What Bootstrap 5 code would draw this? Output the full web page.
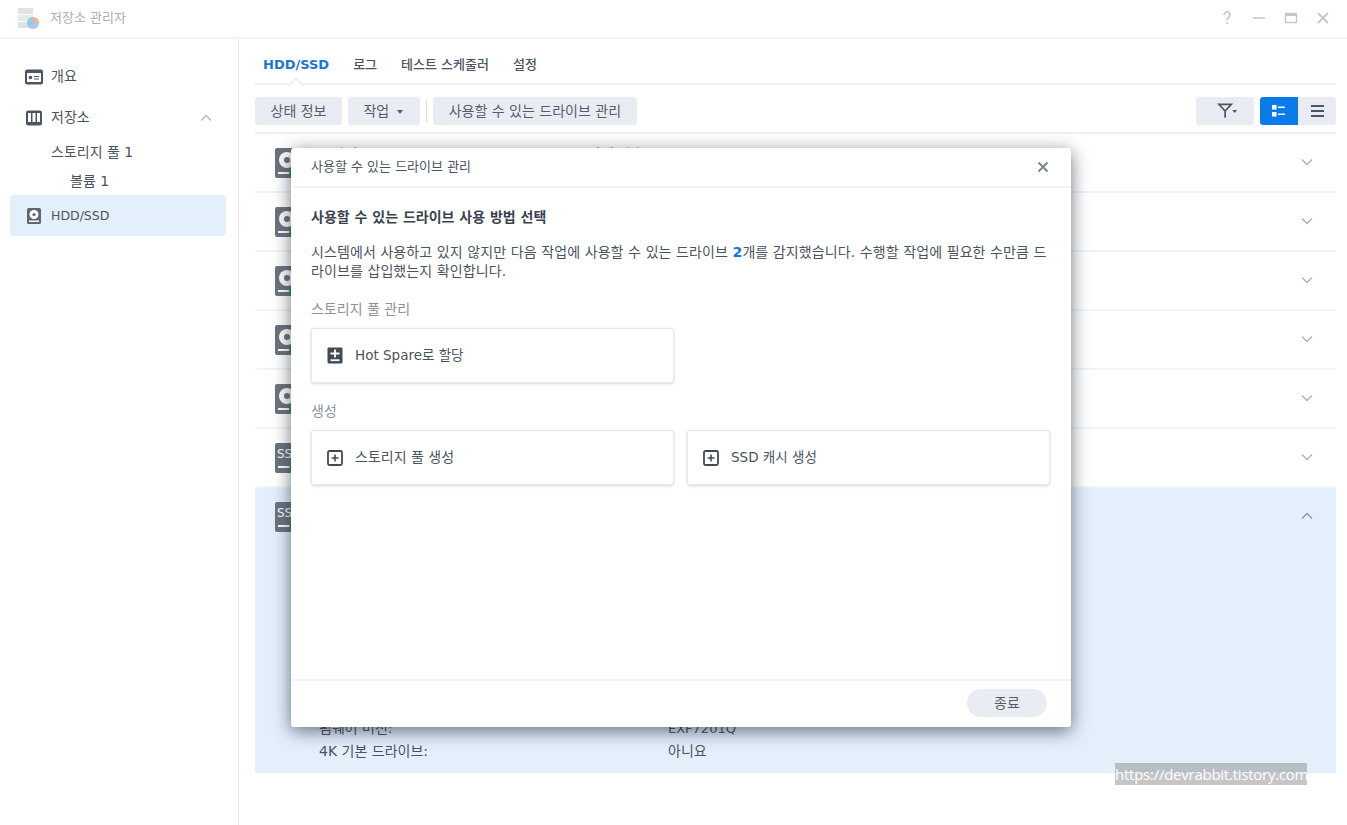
<!DOCTYPE html>
<html lang="ko">
  <head>
    <title>저장소 관리자</title>
    <meta charset="utf-8" />
    <meta name="viewport" content="width=device-width, initial-scale=1" />
    <link
      href="https://cdn.jsdelivr.net/npm/bootstrap@5.3.3/dist/css/bootstrap.min.css"
      rel="stylesheet"
    />
    <style>
      html, body { height: 825px; overflow: hidden; }
      body { font-family: "DejaVu Sans", "Noto Sans CJK KR", sans-serif; font-size: 14px; color: #4a545e; background: #fff; }
      .app-title { height: 39px; border-bottom: 2px solid #f1f3f6; padding: 0 16px 2px 17px; color: #a9afb6; font-size: 13px; }
      .app-logo { display: block; margin-right: 9px; }
      .win-btns { gap: 16px; }
      .app-body { height: 786px; position: relative; }
      .side { width: 239px; border-right: 1px solid #e6e9ed; padding: 17px 12px 0 10px; flex-shrink: 0; }
      .side-item { height: 41px; padding-left: 15px; gap: 8px; border-radius: 4px; }
      .side-chev { margin-right: 14px; }
      .side-sub { height: 29px; padding-left: 41px; }
      .side-sub2 { height: 28px; padding-left: 60px; }
      .side-on { background: #e3effb; }
      .latin-label { font-size: 12.5px; padding-top: 1px; }
      .main { flex: 1; padding: 0 11px 0 16px; min-width: 0; }
      .tabbar { height: 46px; border-bottom: 2px solid #eef0f3; position: relative; gap: 24px; padding: 8px 8px 0; font-size: 13px; }
      .tab-on { color: #1a76d2; font-weight: 700; }
      .tab-other { font-weight: 500; }
      .tab-notch { position: absolute; left: 36px; bottom: -6px; width: 10px; height: 10px; background: #fff; border-left: 2px solid #eef0f3; border-top: 2px solid #eef0f3; transform: rotate(45deg); }
      .toolbar { height: 49px; border-bottom: 2px solid #eef0f3; padding-top: 12px; }
      .tool-btn { height: 28px; padding: 0 15.5px; border: 0; border-radius: 3px; background: #e9edf3; color: #545d67; font-size: 14px; line-height: 28px; white-space: nowrap; }
      .tool-gap { margin-right: 6px; }
      .tool-caret { display: inline-block; width: 0; height: 0; border: 3.5px solid transparent; border-top: 4px solid #545d67; border-bottom: 0; vertical-align: middle; margin: 0 2px 0 3px; }
      .tool-sep { width: 1px; height: 22px; background: #d9dde3; margin: 3px 6px 0; }
      .view-btn { width: 38px; height: 28px; background: #e9edf3; }
      .view-on { background: #0a7cea; border-radius: 3px 0 0 3px; }
      .view-off { border-radius: 0 3px 3px 0; }
      .filter-btn { width: 58px; height: 28px; background: #e9edf3; border-radius: 3px; margin-right: 6px; padding-left: 4px; }
      .drive-row { height: 59px; border-bottom: 2px solid #f1f3f6; padding: 14px 20px 0 20px; position: relative; }
      .drive-open { height: 285px; background: #e3f0fc; border-bottom: 0; }
      .drive-name { position: absolute; left: 64px; top: 10px; }
      .drive-val { position: absolute; left: 333px; top: 10px; }
      .drive-chev { position: absolute; right: 23px; top: 20px; line-height: 1; }
      .spec-list { position: absolute; left: 64px; right: 0; bottom: 10px; }
      .spec-row { height: 23px; line-height: 23px; }
      .spec-key { width: 349px; }
      .spec-code { font-size: 13px; }
      .dlg { position: absolute; left: 291px; top: 148px; width: 780px; height: 579px; background: #fff; border-radius: 3px; box-shadow: 0 4px 18px rgba(30, 40, 55, 0.65); z-index: 5; }
      .dlg-head { height: 40px; border-bottom: 2px solid #f1f3f6; padding: 0 22px 0 20px; font-size: 13px; }
      .dlg-body { flex: 1; padding: 20px 20px 0; }
      .dlg-lead { font-weight: 700; line-height: 19px; margin-bottom: 16px; color: #3a434d; }
      .dlg-text { line-height: 19px; margin-bottom: 19px; letter-spacing: 0.09px; }
      .dlg-group { color: #8a929b; line-height: 19px; margin-bottom: 9px; }
      .dlg-b { color: #1a76d2; font-weight: 700; }
      .pick-row { gap: 13px; margin-bottom: 19px; }
      .pick-card { width: 363px; height: 55px; border: 1px solid #e6e8eb; border-radius: 3px; box-shadow: 0 1px 3px rgba(60, 70, 85, 0.22); padding-left: 15px; gap: 12px; background: #fff; }
      .pick-mixed { font-size: 13.5px; }
      .dlg-foot { height: 48px; border-top: 2px solid #f1f3f6; padding: 8px 24px 0 0; }
      .close-btn { width: 80px; height: 28px; border-radius: 14px; background: #e9edf3; border: 0; font-size: 14px; color: #545d67; padding: 0; }
      .stamp { position: absolute; left: 1115px; top: 763px; width: 192px; height: 22px; background: rgba(128, 128, 128, 0.45); color: #fff; font-family: "Open Sans", sans-serif; font-size: 15px; letter-spacing: -0.25px; line-height: 22px; white-space: nowrap; overflow: hidden; z-index: 6; }
    </style>
  </head>
  <body>
    <div class="app-title d-flex align-items-center">
      <svg class="app-logo" width="24" height="24" viewBox="0 0 24 24">
        <rect x="1" y="2" width="15" height="6" rx="1" fill="#dfe2e6" />
        <rect x="1" y="9" width="15" height="6" rx="1" fill="#e6e8eb" />
        <rect x="1" y="16" width="15" height="6" rx="1" fill="#dfe2e6" />
        <circle cx="16" cy="17" r="6" fill="#a9c6ef" />
        <path d="M16 17V11a6 6 0 0 1 6 6z" fill="#f2b58c" />
        <path d="M16 17l-5 3a6 6 0 0 1-1-3 6 6 0 0 1 6-6z" fill="#8fd0e0" />
      </svg>
      <span>저장소 관리자</span>
      <div class="ms-auto d-flex align-items-center win-btns">
        <svg width="16" height="16" viewBox="0 0 16 16" fill="none" stroke="#c3c7cc" stroke-width="1.6"><path d="M5 5a3 3 0 1 1 4.6 2.5C8.500 8.200 8 8.800 8 10.200" /><path d="M8 12v2" /></svg>
        <svg width="16" height="16" viewBox="0 0 16 16" stroke="#c3c7cc" stroke-width="1.6"><path d="M2 8h12" /></svg>
        <svg width="16" height="16" viewBox="0 0 16 16" fill="none" stroke="#c3c7cc" stroke-width="1.4"><rect x="2.500" y="3.500" width="11" height="9" /><path d="M2.500 5h11" stroke-width="2" /></svg>
        <svg width="16" height="16" viewBox="0 0 16 16" stroke="#c3c7cc" stroke-width="1.8"><path d="M3 3l10 10M13 3L3 13" /></svg>
      </div>
    </div>

    <div class="app-body d-flex">
      <nav class="side">
        <div class="side-item d-flex align-items-center">
          <svg width="18" height="16" viewBox="0 0 18 16"><rect width="18" height="15" y="0.500" rx="2" fill="#4c5663" /><rect x="2" y="4" width="14" height="9" fill="#fff" /><circle cx="5.500" cy="8.500" r="1.800" fill="#4c5663" /><path d="M9 7h5v1H9zM9 9.500h5v1H9z" fill="#4c5663" /></svg>
          <span>개요</span>
        </div>
        <div class="side-item d-flex align-items-center">
          <svg width="18" height="16" viewBox="0 0 18 16"><rect x="1" y="0.500" width="16" height="15" rx="2" fill="#4c5663" /><rect x="3" y="3" width="3" height="9" fill="#fff" /><rect x="7.500" y="3" width="3" height="9" fill="#fff" /><rect x="12" y="3" width="3" height="9" fill="#fff" /></svg>
          <span>저장소</span>
          <svg class="ms-auto side-chev" width="12" height="8" viewBox="0 0 12 8" fill="none" stroke="#b4b9bf" stroke-width="1.300"><path d="M1 6.500l5-5 5 5" /></svg>
        </div>
        <div class="side-sub d-flex align-items-center">스토리지 풀 1</div>
        <div class="side-sub side-sub2 d-flex align-items-center">볼륨 1</div>
        <div class="side-item side-on d-flex align-items-center">
          <svg width="18" height="18" viewBox="0 0 18 18"><rect x="2" y="1" width="14" height="16" rx="1.500" fill="#5d6873" /><circle cx="9" cy="7.500" r="4.500" fill="#fff" /><circle cx="9" cy="7.500" r="1.600" fill="#5d6873" /><rect x="4" y="13.500" width="10" height="1.500" fill="#fff" /></svg>
          <span class="latin-label">HDD/SSD</span>
        </div>
      </nav>

      <main class="main">
        <div class="tabbar d-flex align-items-center">
          <span class="tab-on">HDD/SSD</span>
          <span class="tab-other">로그</span>
          <span class="tab-other">테스트 스케줄러</span>
          <span class="tab-other">설정</span>
          <span class="tab-notch"></span>
        </div>
        <div class="toolbar d-flex">
          <button class="tool-btn tool-gap">상태 정보</button>
          <button class="tool-btn">작업 <span class="tool-caret"></span></button>
          <span class="tool-sep"></span>
          <button class="tool-btn">사용할 수 있는 드라이브 관리</button>
          <div class="filter-btn ms-auto d-flex align-items-center justify-content-center">
            <svg width="21" height="18" viewBox="0 0 22 18" fill="none" stroke="#4c5663" stroke-width="1.800"><path d="M2 2h13l-6.500 7zM8.500 8v8" /><path d="M16 8h5l-2.500 3z" fill="#4c5663" stroke="none" /></svg>
          </div>
          <div class="view-btn view-on d-flex align-items-center justify-content-center">
            <svg width="14" height="12" viewBox="0 0 14 12" fill="#fff"><rect width="4.500" height="4.500" /><rect y="7" width="4.500" height="4.500" /><rect x="6" y="1.500" width="7" height="1.500" /><rect x="6" y="8.500" width="7" height="1.500" /></svg>
          </div>
          <div class="view-btn view-off d-flex align-items-center justify-content-center">
            <svg width="13" height="12" viewBox="0 0 13 12" fill="#4c5663"><rect width="13" height="2" /><rect y="5" width="13" height="2" /><rect y="10" width="13" height="2" /></svg>
          </div>
        </div>

        <div id="rows"></div>
      </main>
    </div>

    <div class="dlg d-flex flex-column">
      <div class="dlg-head d-flex align-items-center justify-content-between">
        <span>사용할 수 있는 드라이브 관리</span>
        <svg width="12" height="12" viewBox="0 0 12 12" stroke="#7d858e" stroke-width="2"><path d="M1.500 1.500l9 9M10.500 1.500l-9 9" /></svg>
      </div>
      <div class="dlg-body">
        <div class="dlg-lead">사용할 수 있는 드라이브 사용 방법 선택</div>
        <div class="dlg-text">시스템에서 사용하고 있지 않지만 다음 작업에 사용할 수 있는 드라이브 <span class="dlg-b">2</span>개를 감지했습니다. 수행할 작업에 필요한 수만큼 드라이브를 삽입했는지 확인합니다.</div>
        <div class="dlg-group">스토리지 풀 관리</div>
        <div class="pick-row d-flex">
          <div class="pick-card d-flex align-items-center">
            <svg width="16" height="17" viewBox="0 0 16 17"><rect x="0.500" y="0.500" width="15" height="16" rx="1" fill="#414b55" /><path d="M3.500 6.500h9M8 2.500v8" stroke="#fff" stroke-width="1.800" /><path d="M3.500 13.200h9" stroke="#fff" stroke-width="1.800" /></svg>
            <span class="pick-mixed">Hot Spare로 할당</span>
          </div>
        </div>
        <div class="dlg-group">생성</div>
        <div class="pick-row d-flex">
          <div class="pick-card d-flex align-items-center">
            <svg width="16" height="16" viewBox="0 0 16 16" fill="none" stroke="#414b55"><rect x="1" y="1" width="14" height="14" rx="1.500" stroke-width="1.800" /><path d="M4.500 8h7M8 4.500v7" stroke-width="1.600" /></svg>
            <span>스토리지 풀 생성</span>
          </div>
          <div class="pick-card d-flex align-items-center">
            <svg width="16" height="16" viewBox="0 0 16 16" fill="none" stroke="#414b55"><rect x="1" y="1" width="14" height="14" rx="1.500" stroke-width="1.800" /><path d="M4.500 8h7M8 4.500v7" stroke-width="1.600" /></svg>
            <span class="pick-mixed">SSD 캐시 생성</span>
          </div>
        </div>
      </div>
      <div class="dlg-foot d-flex justify-content-end">
        <button class="close-btn">종료</button>
      </div>
    </div>

    <div class="stamp">https://devrabbit.tistory.com</div>

    <script>
      // drive rows, only the first one's text peeks out above the dialog
      const hdd = '<svg width="26" height="30" viewBox="0 0 26 30"><rect width="26" height="30" rx="2" fill="#6b747e"/><circle cx="12" cy="12" r="8" fill="#fff"/><circle cx="12" cy="12" r="3" fill="#6b747e"/><rect x="3" y="24" width="12" height="2" fill="#fff"/><circle cx="18" cy="26" r="4" fill="#1e9e3e"/></svg>';
      const ssd = '<svg width="26" height="30" viewBox="0 0 26 30"><rect width="26" height="30" rx="2" fill="#6b747e"/><text x="2" y="15" font-size="12" font-family="DejaVu Sans" fill="#fff">SSD</text><rect x="3" y="23" width="12" height="2" fill="#fff"/><circle cx="18" cy="26" r="4" fill="#1e9e3e"/></svg>';
      const down = '<svg width="12" height="8" viewBox="0 0 12 8" fill="none" stroke="#a9afb6" stroke-width="1.300"><path d="M1 1.500l5 5 5-5"/></svg>';
      const up = '<svg width="12" height="8" viewBox="0 0 12 8" fill="none" stroke="#8b949d" stroke-width="1.300"><path d="M1 6.500l5-5 5 5"/></svg>';
      let html = "";
      [hdd, hdd, hdd, hdd, hdd, ssd].forEach((icon, i) => {
        const label = i === 0 ? '<span class="drive-name">드라이브 1</span><span class="drive-val">상태 양호</span>' : "";
        html += '<div class="drive-row">' + icon + label + '<span class="drive-chev">' + down + "</span></div>";
      });
      html += '<div class="drive-row drive-open">' + ssd + '<span class="drive-chev">' + up + '</span><div class="spec-list"><div class="spec-row d-flex"><span class="spec-key">펌웨어 버전:</span><span class="spec-code">EXF7201Q</span></div><div class="spec-row d-flex"><span class="spec-key">4K 기본 드라이브:</span><span>아니요</span></div></div></div>';
      document.getElementById("rows").innerHTML = html;
    </script>
    <script src="https://cdn.jsdelivr.net/npm/bootstrap@5.3.3/dist/js/bootstrap.bundle.min.js"></script>
  </body>
</html>
